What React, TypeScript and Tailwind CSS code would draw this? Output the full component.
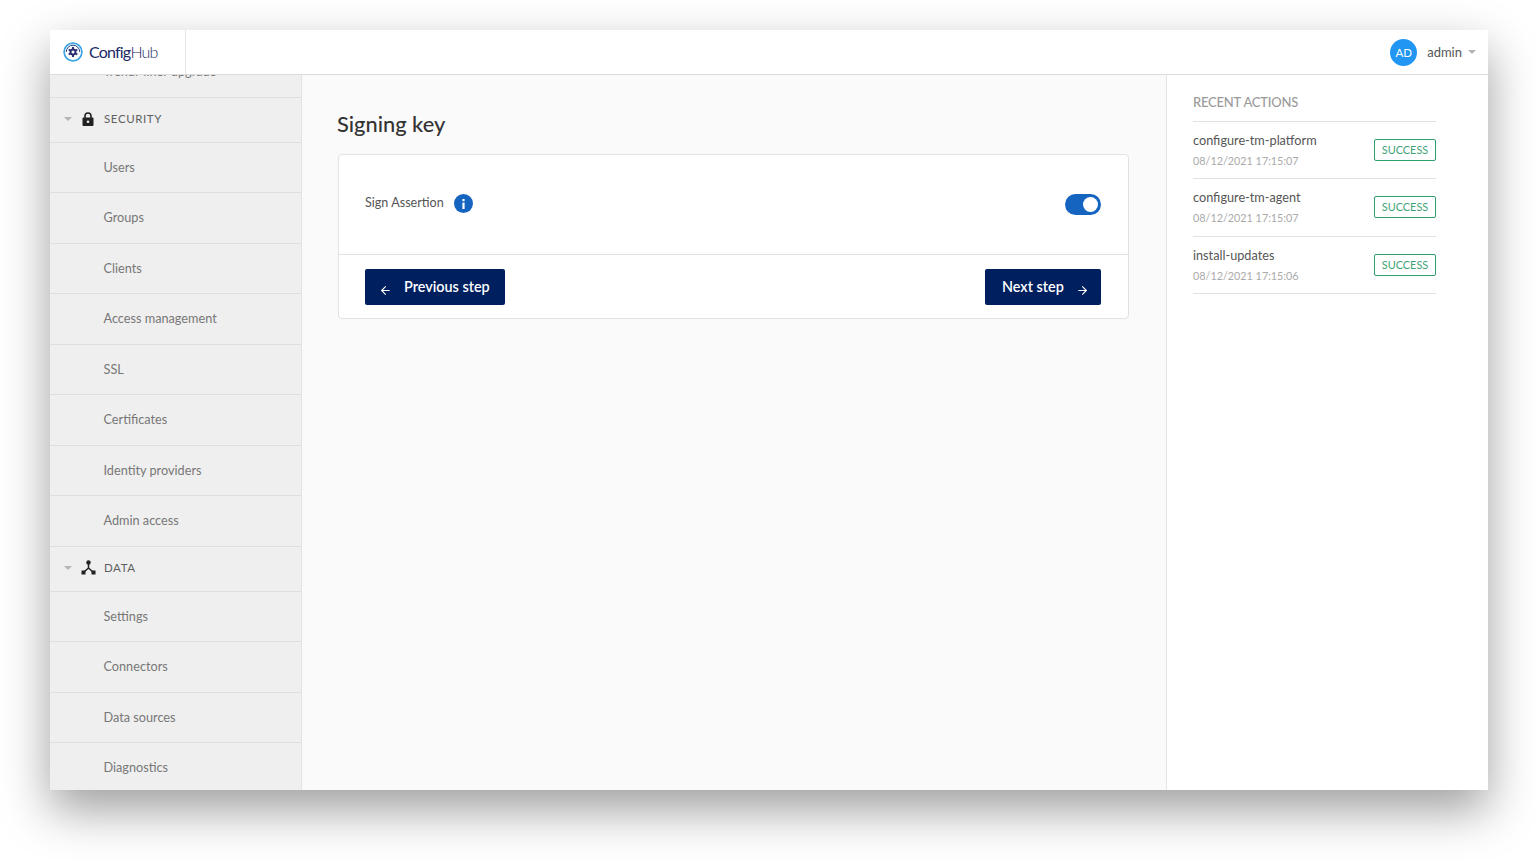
import { ArrowLeft, ArrowRight } from "lucide-react"

const securityItems = ["Users", "Groups", "Clients", "Access management", "SSL", "Certificates", "Identity providers", "Admin access"]
const dataItems = ["Settings", "Connectors", "Data sources", "Diagnostics"]
const actions = [
    { name: "configure-tm-platform", time: "08/12/2021 17:15:07" },
    { name: "configure-tm-agent", time: "08/12/2021 17:15:07" },
    { name: "install-updates", time: "08/12/2021 17:15:06" },
]

function Caret() {
    return <span className="w-0 h-0 border-x-[4px] border-x-transparent border-t-[4px] border-t-[#b5b5b5]" />
}

function Logo() {
    return (
        <svg width="20" height="20" viewBox="0 0 20 20">
            <circle cx="10" cy="10" r="8.9" fill="none" stroke="#3ba4e4" strokeWidth="1.7" />
            <path d="M3.2 10a6.8 6.8 0 0 1 13.6 0" fill="none" stroke="#1d3f7e" strokeWidth="1" />
            <g fill="#2b3170">
                <circle cx="10" cy="10" r="3.5" />
                <rect x="9" y="5" width="2" height="10" />
                <rect x="9" y="5" width="2" height="10" transform="rotate(60 10 10)" />
                <rect x="9" y="5" width="2" height="10" transform="rotate(120 10 10)" />
            </g>
            <circle cx="10" cy="10" r="1.5" fill="#fff" />
        </svg>
    )
}

function NavItem({ label }: { label: string }) {
    return (
        <div className="h-[50.5px] shrink-0 flex items-center pl-[53.5px] border-b border-[#dedede] text-[12.7px] text-[#777]">
            {label}
        </div>
    )
}

function NavSection({ label, icon }: { label: string; icon: React.ReactNode }) {
    return (
        <div className="h-[45px] shrink-0 flex items-center pl-[14px] pb-[2px] border-b border-[#dedede]">
            <Caret />
            <span className="w-[16px] ml-[8px] flex justify-center">{icon}</span>
            <span className="ml-[8px] text-[11.5px] tracking-[0.6px] text-[#5f5f5f]">{label}</span>
        </div>
    )
}

function App() {
    return (
        <div className="w-[1538px] h-[860px] bg-white pt-[30px] pl-[50px] font-['Lato',sans-serif]">
            <div className="w-[1438px] h-[760px] flex flex-col overflow-hidden bg-white shadow-[0_20px_45px_rgba(0,0,0,0.38)]">
                <header className="h-[45px] shrink-0 flex items-center bg-white border-b border-[#dcdcdc] z-10">
                    <div className="w-[136px] h-full flex items-center pl-[13px] gap-[6px] border-r border-[#e6e6e6]">
                        <Logo />
                        <span className="text-[16px] tracking-[-0.8px] text-[#1b2a66]">
                            Config<span className="font-light">Hub</span>
                        </span>
                    </div>
                    <div className="ml-auto flex items-center pr-[12px] pt-[1px]">
                        <div className="w-[27px] h-[27px] rounded-full bg-[#2196f3] text-white text-[11.5px] flex items-center justify-center">AD</div>
                        <span className="ml-[10px] text-[13px] text-[#555]">admin</span>
                        <span className="ml-[6px] mb-[1px] flex"><Caret /></span>
                    </div>
                </header>
                <div className="flex-1 flex min-h-0">
                    <aside className="w-[252px] shrink-0 bg-[#efefef] border-r border-[#e4e4e4] overflow-hidden">
                        <div className="-mt-[28px] flex flex-col">
                            <NavItem label="TrendMiner upgrade" />
                            <NavSection
                                label="SECURITY"
                                icon={
                                    <svg width="12" height="14" viewBox="0 0 12 14">
                                        <path d="M3 6V4a3 3 0 0 1 6 0v2" fill="none" stroke="#222" strokeWidth="1.6" />
                                        <rect x="0.5" y="5.5" width="11" height="8.5" rx="1" fill="#222" />
                                        <circle cx="6" cy="9.7" r="1.3" fill="#efefef" />
                                    </svg>
                                }
                            />
                            {securityItems.map((item) => <NavItem key={item} label={item} />)}
                            <NavSection
                                label="DATA"
                                icon={
                                    <svg width="15" height="15" viewBox="0 0 15 15">
                                        <circle cx="7.5" cy="2.5" r="2.2" fill="#222" />
                                        <path d="M7.5 3v5M7.5 8L3 12M7.5 8l4.5 4" fill="none" stroke="#222" strokeWidth="1.5" />
                                        <rect x="0.5" y="10.5" width="4" height="4" fill="#222" />
                                        <rect x="10.5" y="10.5" width="4" height="4" fill="#222" />
                                    </svg>
                                }
                            />
                            {dataItems.map((item) => <NavItem key={item} label={item} />)}
                        </div>
                    </aside>
                    <main className="flex-1 bg-[#fafafa] pl-[35px] pr-[37px] pt-[34px]">
                        <h1 className="text-[21.8px] leading-[29px] text-[#333] font-medium">Signing key</h1>
                        <div className="mt-[16px] ml-px bg-white border border-[#e2e2e2] rounded-[4px]">
                            <div className="h-[100px] flex items-start pl-[26px] pr-[27px] pt-[39px] border-b border-[#e2e2e2]">
                                <span className="text-[12.6px] leading-[17px] text-[#555]">Sign Assertion</span>
                                <span className="ml-[10px] w-[19px] h-[19px] rounded-full bg-[#1565c0] text-white flex items-center justify-center">
                                    <svg width="3" height="10" viewBox="0 0 3 10" fill="#fff">
                                        <rect x="0.4" y="0" width="2.2" height="2.2" />
                                        <rect x="0.4" y="3.6" width="2.2" height="6.4" />
                                    </svg>
                                </span>
                                <span className="ml-auto w-[36px] h-[21px] rounded-full bg-[#1565c0] flex items-center justify-end pr-[3px]">
                                    <span className="w-[15px] h-[15px] rounded-full bg-white" />
                                </span>
                            </div>
                            <div className="h-[63px] flex items-center justify-between pl-[26px] pr-[27px]">
                                <button className="w-[140px] h-[36px] rounded-[2px] bg-[#001f5f] text-white text-[14.4px] font-semibold flex items-center pl-[14px] gap-[12px]">
                                    <ArrowLeft size={13} className="mt-[8px]" />
                                    Previous step
                                </button>
                                <button className="w-[116px] h-[36px] rounded-[2px] bg-[#001f5f] text-white text-[14.4px] font-semibold flex items-center pl-[17px] gap-[12px]">
                                    Next step
                                    <ArrowRight size={13} className="mt-[8px]" />
                                </button>
                            </div>
                        </div>
                    </main>
                    <aside className="w-[322px] shrink-0 bg-white border-l border-[#e4e4e4] pl-[26px] pr-[52px] pt-[18px]">
                        <div className="h-[29px] text-[13px] font-medium tracking-[-0.2px] leading-[18px] text-[#9a9a9a] border-b border-[#e2e2e2]">RECENT ACTIONS</div>
                        {actions.map((a) => (
                            <div key={a.name} className="h-[57.3px] flex items-center justify-between border-b border-[#e2e2e2]">
                                <div className="pt-[1px]">
                                    <div className="text-[12.7px] leading-[17px] text-[#555]">{a.name}</div>
                                    <div className="mt-[4px] text-[10.8px] leading-[16px] text-[#aaa]">{a.time}</div>
                                </div>
                                <span className="w-[62px] h-[22px] rounded-[2px] border border-[#2e9e6b] text-[#3fa377] text-[10.9px] flex items-center justify-center">SUCCESS</span>
                            </div>
                        ))}
                    </aside>
                </div>
            </div>
        </div>
    )
}

export default App
